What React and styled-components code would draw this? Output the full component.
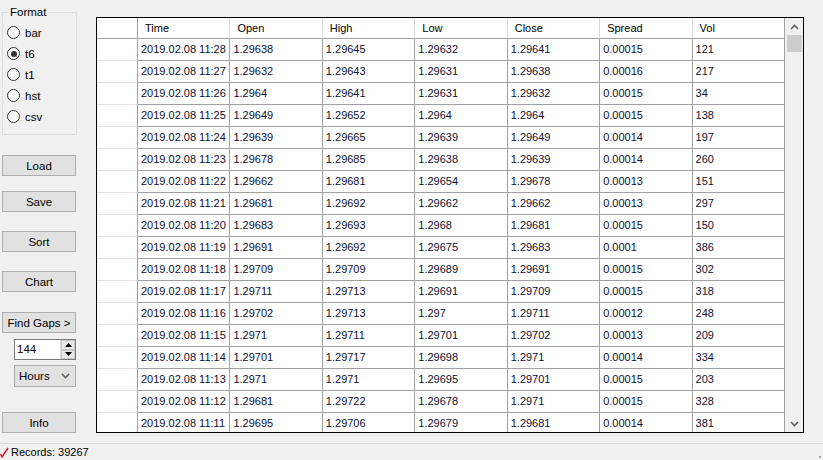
import React from "react";
import styled, { createGlobalStyle } from "styled-components";

const GlobalStyle = createGlobalStyle`
  html, body {
    margin: 0;
    padding: 0;
    background: #f0f0f0;
  }
  * {
    box-sizing: border-box;
  }
`;

const rows = [
  ["2019.02.08 11:28", "1.29638", "1.29645", "1.29632", "1.29641", "0.00015", "121"],
  ["2019.02.08 11:27", "1.29632", "1.29643", "1.29631", "1.29638", "0.00016", "217"],
  ["2019.02.08 11:26", "1.2964", "1.29641", "1.29631", "1.29632", "0.00015", "34"],
  ["2019.02.08 11:25", "1.29649", "1.29652", "1.2964", "1.2964", "0.00015", "138"],
  ["2019.02.08 11:24", "1.29639", "1.29665", "1.29639", "1.29649", "0.00014", "197"],
  ["2019.02.08 11:23", "1.29678", "1.29685", "1.29638", "1.29639", "0.00014", "260"],
  ["2019.02.08 11:22", "1.29662", "1.29681", "1.29654", "1.29678", "0.00013", "151"],
  ["2019.02.08 11:21", "1.29681", "1.29692", "1.29662", "1.29662", "0.00013", "297"],
  ["2019.02.08 11:20", "1.29683", "1.29693", "1.2968", "1.29681", "0.00015", "150"],
  ["2019.02.08 11:19", "1.29691", "1.29692", "1.29675", "1.29683", "0.0001", "386"],
  ["2019.02.08 11:18", "1.29709", "1.29709", "1.29689", "1.29691", "0.00015", "302"],
  ["2019.02.08 11:17", "1.29711", "1.29713", "1.29691", "1.29709", "0.00015", "318"],
  ["2019.02.08 11:16", "1.29702", "1.29713", "1.297", "1.29711", "0.00012", "248"],
  ["2019.02.08 11:15", "1.2971", "1.29711", "1.29701", "1.29702", "0.00013", "209"],
  ["2019.02.08 11:14", "1.29701", "1.29717", "1.29698", "1.2971", "0.00014", "334"],
  ["2019.02.08 11:13", "1.2971", "1.2971", "1.29695", "1.29701", "0.00015", "203"],
  ["2019.02.08 11:12", "1.29681", "1.29722", "1.29678", "1.2971", "0.00015", "328"],
  ["2019.02.08 11:11", "1.29695", "1.29706", "1.29679", "1.29681", "0.00014", "381"],
];

const columns = ["Time", "Open", "High", "Low", "Close", "Spread", "Vol"];
const formats = ["bar", "t6", "t1", "hst", "csv"];

const Chevron = ({ down }) => (
  <svg width="9" height="6" viewBox="0 0 9 6">
    <polyline
      points={down ? "1,1 4.5,4.5 8,1" : "1,5 4.5,1.5 8,5"}
      fill="none"
      stroke="#606060"
      strokeWidth="1.6"
    />
  </svg>
);

export default function App() {
  return (
    <Page>
      <GlobalStyle />
      <Main>
        <LeftPanel>
          <GroupBox>
            <Legend>Format</Legend>
            {formats.map((f) => (
              <RadioRow key={f}>
                <RadioCircle $checked={f === "t6"} />
                {f}
              </RadioRow>
            ))}
          </GroupBox>
          <Button $top={20}>Load</Button>
          <Button $top={15}>Save</Button>
          <Button $top={19}>Sort</Button>
          <Button $top={19}>Chart</Button>
          <Button $top={20}>Find Gaps &gt;</Button>
          <Spinner>
            <SpinValue>144</SpinValue>
            <SpinButtons>
              <SpinArrow>
                <svg width="7" height="4" viewBox="0 0 7 4">
                  <polygon points="0,4 3.5,0 7,4" fill="#000" />
                </svg>
              </SpinArrow>
              <SpinArrow>
                <svg width="7" height="4" viewBox="0 0 7 4">
                  <polygon points="0,0 3.5,4 7,0" fill="#000" />
                </svg>
              </SpinArrow>
            </SpinButtons>
          </Spinner>
          <Combo>
            Hours
            <Chevron down />
          </Combo>
          <Button $top={25}>Info</Button>
        </LeftPanel>

        <GridArea>
          <Grid>
            <Table>
              <CornerCell />
              {columns.map((c) => (
                <HeaderCell key={c}>{c}</HeaderCell>
              ))}
              {rows.map((r, i) => (
                <React.Fragment key={i}>
                  <RowHeader />
                  {r.map((v, j) => (
                    <Cell key={j}>{v}</Cell>
                  ))}
                </React.Fragment>
              ))}
            </Table>
            <ScrollBar>
              <ScrollButton>
                <Chevron />
              </ScrollButton>
              <Thumb />
              <Track />
              <ScrollButton>
                <Chevron down />
              </ScrollButton>
            </ScrollBar>
          </Grid>
        </GridArea>
      </Main>
      <StatusBar>
        <svg width="9" height="11" viewBox="0 0 9 11">
          <polyline points="0.5,7 2,10 8,1" fill="none" stroke="#e01010" strokeWidth="1.4" />
        </svg>
        Records: 39267
        <Grip>
          <svg width="4" height="4" viewBox="0 0 4 4">
            <rect x="1" y="1" width="2" height="2" fill="#a8a8a8" />
          </svg>
        </Grip>
      </StatusBar>
    </Page>
  );
}

const Page = styled.div`
  width: 823px;
  height: 460px;
  display: flex;
  flex-direction: column;
  background: #f0f0f0;
  font-family: "Liberation Sans", Arial, sans-serif;
  font-size: 11px;
  color: #000;
  overflow: hidden;
`;

const Main = styled.div`
  display: flex;
  height: 443px;
`;

const LeftPanel = styled.div`
  width: 96px;
  padding: 12px 0 0 2px;
  display: flex;
  flex-direction: column;
`;

const GroupBox = styled.div`
  position: relative;
  width: 75px;
  height: 123px;
  border: 1px solid #dcdcdc;
  padding: 9px 0 0 4px;
  font-size: 11.5px;
`;

const Legend = styled.span`
  position: absolute;
  top: -7px;
  left: 5px;
  padding: 0 2px;
  background: #f0f0f0;
  line-height: 13px;
`;

const RadioRow = styled.div`
  display: flex;
  align-items: center;
  height: 21px;
  gap: 5px;
`;

const RadioCircle = styled.span`
  width: 13px;
  height: 13px;
  border-radius: 50%;
  border: 1px solid #333;
  background: #fff;
  display: flex;
  align-items: center;
  justify-content: center;
  &::after {
    content: "";
    display: ${(p) => (p.$checked ? "block" : "none")};
    width: 6px;
    height: 6px;
    border-radius: 50%;
    background: #333;
  }
`;

const Button = styled.div`
  width: 74px;
  height: 21px;
  margin-top: ${(p) => p.$top}px;
  background: #e1e1e1;
  border: 1px solid #adadad;
  display: flex;
  align-items: center;
  justify-content: center;
  font-size: 11.5px;
`;

const Spinner = styled.div`
  width: 62px;
  height: 21px;
  margin: 6px 0 0 12px;
  border: 1px solid #7a7a7a;
  background: #fff;
  display: flex;
`;

const SpinValue = styled.div`
  flex: 1;
  padding-left: 2px;
  line-height: 19px;
  font-size: 11.5px;
`;

const SpinButtons = styled.div`
  width: 15px;
  display: flex;
  flex-direction: column;
  border-left: 1px solid #dcdcdc;
`;

const SpinArrow = styled.div`
  flex: 1;
  background: #e8e8e8;
  border: 1px solid #c8c8c8;
  display: flex;
  align-items: center;
  justify-content: center;
`;

const Combo = styled.div`
  width: 62px;
  height: 22px;
  margin: 5px 0 0 12px;
  background: #e1e1e1;
  border: 1px solid #adadad;
  display: flex;
  align-items: center;
  justify-content: space-between;
  padding: 0 5px 0 4px;
  font-size: 11.5px;
`;

const GridArea = styled.div`
  padding-top: 17px;
`;

const Grid = styled.div`
  width: 708px;
  height: 416px;
  border: 1px solid #000;
  background: #fff;
  display: flex;
`;

const Table = styled.div`
  width: 688px;
  height: 100%;
  overflow: hidden;
  display: grid;
  grid-template-columns: 41px repeat(7, 1fr);
  grid-template-rows: 21px;
  grid-auto-rows: 22px;
  align-content: start;
`;

const CornerCell = styled.div`
  border-right: 1px solid #a0a0a0;
  border-bottom: 1px solid #a0a0a0;
`;

const HeaderCell = styled.div`
  border-right: 1px solid #d9d9d9;
  border-bottom: 1px solid #a0a0a0;
  padding-left: 7px;
  line-height: 20px;
  font-size: 11px;
  white-space: nowrap;
  &:nth-child(8) {
    border-right-color: #a0a0a0;
  }
`;

const RowHeader = styled.div`
  border-right: 1px solid #a0a0a0;
  border-bottom: 1px solid #e3e3e3;
`;

const Cell = styled.div`
  border-right: 1px solid #a0a0a0;
  border-bottom: 1px solid #a0a0a0;
  padding-left: 3px;
  line-height: 21px;
  font-size: 11px;
  color: #101030;
  white-space: nowrap;
  overflow: hidden;
`;

const ScrollBar = styled.div`
  width: 18px;
  height: 100%;
  background: #f0f0f0;
  display: flex;
  flex-direction: column;
  padding-left: 1px;
`;

const ScrollButton = styled.div`
  height: 17px;
  display: flex;
  align-items: center;
  justify-content: center;
`;

const Thumb = styled.div`
  height: 17px;
  margin: 0 1px;
  background: #cdcdcd;
`;

const Track = styled.div`
  flex: 1;
`;

const StatusBar = styled.div`
  position: relative;
  height: 17px;
  border-top: 1px solid #d7d7d7;
  display: flex;
  align-items: center;
  gap: 2px;
  font-size: 11px;
`;

const Grip = styled.div`
  position: absolute;
  right: 1px;
  bottom: 1px;
  display: flex;
`;
